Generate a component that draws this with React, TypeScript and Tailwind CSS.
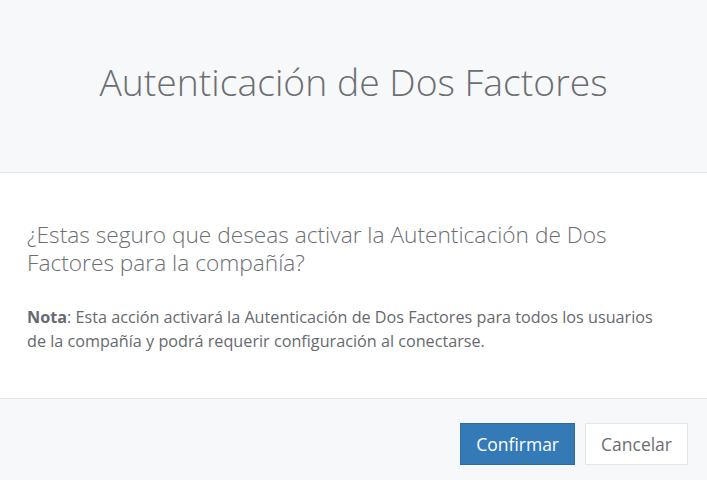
import React from "react";

const App: React.FC = () => {
  return (
    <div
      className="w-[707px] h-[480px] bg-white flex flex-col overflow-hidden"
      style={{ fontFamily: '"Open Sans", sans-serif' }}
    >
      {/* Encabezado */}
      <div className="h-[173px] bg-[#f7f8fa] border-b border-[#e3e5e8] flex justify-center pt-[58px]">
        <h1 className="text-[37.3px] leading-[48px] font-light text-[#6b6e72]">
          Autenticación de Dos Factores
        </h1>
      </div>

      {/* Cuerpo */}
      <div className="flex-1 px-[27px] pt-[48px]">
        <p className="max-w-[600px] text-[22.7px] leading-[28px] font-light text-[#6b6e72]">
          ¿Estas seguro que deseas activar la Autenticación de Dos Factores para la compañía?
        </p>
        <p className="mt-[28px] max-w-[640px] text-[16.2px] leading-[24px] text-[#666a6e]">
          <span className="font-bold">Nota</span>: Esta acción activará la Autenticación de Dos Factores para todos los usuarios de la compañía y podrá requerir configuración al conectarse.
        </p>
      </div>

      {/* Pie */}
      <div className="h-[82px] bg-[#f7f8fa] border-t border-[#e3e5e8] flex justify-end items-start pt-[24px] pr-[19px] gap-[10px]">
        <button className="h-[42px] px-[15px] bg-[#337ab7] border border-[#2e6da4] text-white text-[17.5px]">
          Confirmar
        </button>
        <button className="h-[42px] px-[15px] bg-white border border-[#e3e5e8] text-[#6b6e72] text-[17.5px]">
          Cancelar
        </button>
      </div>
    </div>
  );
};

export default App;
